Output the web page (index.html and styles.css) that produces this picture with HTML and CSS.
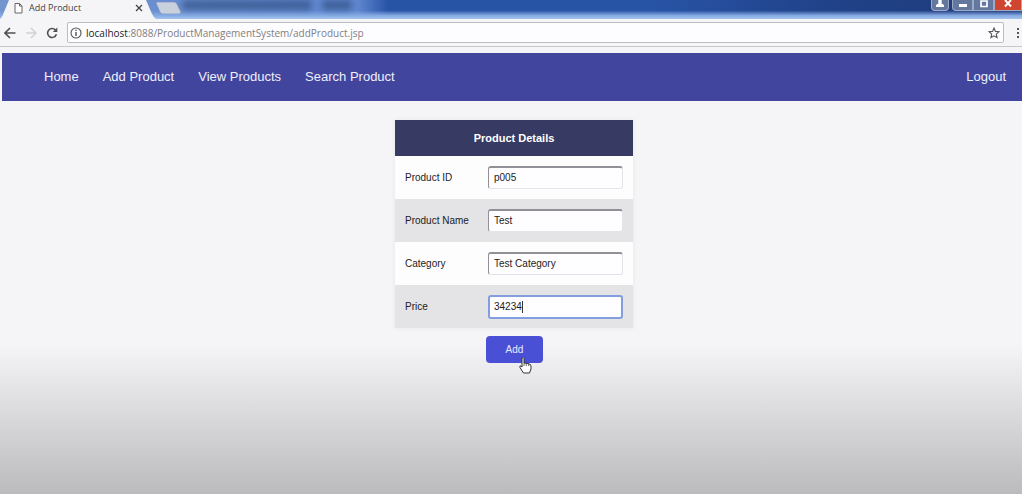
FILE: index.html
```
<!DOCTYPE html>
<html lang="en">
<head>
<meta charset="utf-8">
<title>Add Product</title>
<link rel="stylesheet" href="styles.css">
</head>
<body>
<header class="browser">
  <div class="titlebar">
    <div class="tab">
      <svg class="tab-bg" viewBox="0 0 156 19" preserveAspectRatio="none" aria-hidden="true"><path d="M0 19 Q2 18 4 12 L9 0 H146 L152 14 Q154 18 156 19Z" fill="#f5f5f7"/></svg>
      <svg class="page-icon" viewBox="0 0 9 12" aria-hidden="true"><path d="M1 1.5H5.5L8 4V11H1Z M5.5 1.5V4H8" fill="#fff" stroke="#666"/></svg>
      <span class="tab-title">Add Product</span>
      <button class="tab-close" aria-label="Close tab"><svg viewBox="0 0 8 8"><path d="M1 1L7 7M7 1L1 7" stroke="#444" stroke-width="1.3"/></svg></button>
    </div>
    <button class="new-tab" aria-label="New tab"><svg viewBox="0 0 26 12"><path d="M1 0H18Q20 0 21 2L25 10Q25 12 23 12H7Q5 12 4 10L0 1Z" fill="#c9d1df" stroke="#7e93b9" stroke-width=".7"/></svg></button>
    <div class="glass"><i class="smudge smudge-long"></i><i class="smudge smudge-short"></i></div>
    <div class="window-controls">
      <button class="control user" aria-label="Profile"><svg viewBox="0 0 10 8"><path d="M3.3 0H6.7V3H6L9 5V7H1V5L4 3H3.3Z" fill="#fff"/></svg></button>
      <button class="control minimize" aria-label="Minimize"><svg viewBox="0 0 10 8"><path d="M1 4H9V7H1Z" fill="#fff"/></svg></button>
      <button class="control restore" aria-label="Restore"><svg viewBox="0 0 10 8"><path d="M2 1H8V6.5H2Z" fill="none" stroke="#fff" stroke-width="1.7"/></svg></button>
      <button class="control close" aria-label="Close"><svg viewBox="0 0 10 8"><path d="M2 0L8 6.5M8 0L2 6.5" stroke="#fff" stroke-width="2"/></svg></button>
    </div>
  </div>
  <div class="toolbar">
    <button class="tool" aria-label="Back"><svg viewBox="0 0 12 12"><path d="M11.5 6H1.5M6 1L1 6L6 11" fill="none" stroke="#505054" stroke-width="1.6"/></svg></button>
    <button class="tool" aria-label="Forward"><svg viewBox="0 0 12 12"><path d="M1 6H10.5M6 1L11 6L6 11" fill="none" stroke="#d2d2d6" stroke-width="1.5"/></svg></button>
    <button class="tool" aria-label="Reload"><svg viewBox="0 0 12 12"><path d="M9.5 3A4.5 4.5 0 1 0 10.4 7.3" fill="none" stroke="#505054" stroke-width="1.6"/><path d="M11.3 .5V5H6.8Z" fill="#505054"/></svg></button>
    <div class="address">
      <svg class="info" viewBox="0 0 12 12" aria-hidden="true"><circle cx="6" cy="6" r="5" fill="none" stroke="#555" stroke-width="1.1"/><path d="M6 5V9M6 2.8V4.1" stroke="#555" stroke-width="1.4"/></svg>
      <span class="url"><b class="host">localhost</b>:8088/ProductManagementSystem/addProduct.jsp</span>
      <button class="star" aria-label="Bookmark"><svg viewBox="0 0 12 12"><path d="M6 1L7.4 4.4L11 4.7L8.3 7.1L9.1 10.7L6 8.8L2.9 10.7L3.7 7.1L1 4.7L4.6 4.4Z" fill="none" stroke="#555" stroke-width="1.1"/></svg></button>
    </div>
    <button class="more" aria-label="Menu"><svg viewBox="0 0 4 12"><path d="M1 1H3V3H1ZM1 5H3V7H1ZM1 9H3V11H1Z" fill="#555"/></svg></button>
  </div>
</header>
<nav class="nav">
  <a href="#home">Home</a>
  <a href="#add">Add Product</a>
  <a href="#view">View Products</a>
  <a href="#search">Search Product</a>
  <a class="logout" href="#logout">Logout</a>
</nav>
<main class="main">
  <form class="form">
    <table class="details">
      <thead><tr><th colspan="2">Product Details</th></tr></thead>
      <tbody>
        <tr><td><label for="pid">Product ID</label></td><td class="value"><input class="field" id="pid" type="text" value="p005"></td></tr>
        <tr><td><label for="pname">Product Name</label></td><td class="value"><input class="field" id="pname" type="text" value="Test"></td></tr>
        <tr><td><label for="category">Category</label></td><td class="value"><input class="field" id="category" type="text" value="Test Category"></td></tr>
        <tr><td><label for="price">Price</label></td><td class="value"><div class="active-field"><input class="field active" id="price" type="text" value="34234"><i class="caret"></i></div></td></tr>
      </tbody>
    </table>
    <div class="action">
      <button class="add" type="button">Add</button>
      <svg class="cursor" viewBox="0 0 13 17" aria-hidden="true"><path d="M3 1Q4.5 0 5 1.5V6L9 6.5Q12 7 12 9V12L10.5 16H4.5L1 10.5Q.3 8.5 2 9L3 10Z" fill="#fff" stroke="#333"/><path d="M5 6V9M7.3 6.5V9M9.6 7V9" stroke="#444" stroke-width=".8"/></svg>
    </div>
  </form>
</main>
</body>
</html>
```
FILE: styles.css
```
* { box-sizing: border-box; }
body {
  margin: 0;
  min-height: 100vh;
  display: flex;
  flex-direction: column;
  background: #f5f4f7;
  font-family: "Liberation Sans", Arial, sans-serif;
}
button { padding: 0; border: 0; background: none; font: inherit; }
svg { display: block; }
.browser { background: #f5f5f7; border-bottom: 1px solid #c8c8cc; font-family: "Open Sans", sans-serif; }
.titlebar {
  display: flex;
  height: 19px;
  overflow: hidden;
  background: linear-gradient(#24408c00 55%, #86aae3 82%, #a6c4ed), linear-gradient(90deg, #7294cf, #5f86cf 35%, #2854a6 38%, #2854a6 64%, #21438a 80%, #1e3979);
}
.tab { position: relative; display: flex; flex: 0 0 156px; height: 19px; padding: 0 12px 0 14px; align-items: flex-start; }
.tab-bg { position: absolute; inset: 0; width: 100%; height: 100%; }
.page-icon { position: relative; width: 9px; height: 12px; margin-top: 2px; }
.tab-title { position: relative; flex: 1; margin-left: 6px; font-size: 9px; line-height: 16px; color: #444; }
.tab-close { position: relative; width: 8px; height: 8px; margin: 4px 1px 0 0; }
.new-tab { width: 26px; height: 12px; margin-top: 2px; }
.glass { flex: 1; display: flex; }
.smudge { height: 10px; border-radius: 4px; background: #294777; filter: blur(3px); opacity: .6; }
.smudge-long { width: 130px; }
.smudge-short { width: 30px; margin-left: 10px; }
.window-controls { display: flex; height: 11px; }
.control { display: flex; justify-content: center; width: 21px; height: 11px; border: 1px solid #9caac6; border-top: 0; background: #63779f; }
.control svg { width: 10px; height: 8px; }
.user { width: 18px; margin-right: 3px; border-radius: 0 0 4px 4px; }
.minimize { border-radius: 0 0 0 4px; }
.close { width: 28px; background: #d0452f; }
.toolbar { display: flex; align-items: center; height: 27px; padding: 0 2px 0 4px; }
.tool { width: 12px; height: 12px; margin-right: 9px; }
.tool svg, .star svg { width: 12px; height: 12px; }
.address { display: flex; flex: 1; align-items: center; height: 21px; margin-right: 12px; padding: 0 3px 0 2px; border: 1px solid #bdbdc0; border-radius: 2px; background: #fdfcfe; }
.info { width: 12px; height: 12px; margin-right: 4px; }
.url { flex: 1; font-size: 10px; line-height: 16px; color: #808080; white-space: nowrap; }
.host { font-weight: 400; color: #222; }
.more svg { width: 4px; height: 12px; }
.nav { display: flex; gap: 24px; align-items: center; height: 48px; margin: 6px 0 0 2px; padding: 0 16px 2px 42px; background: #42459d; font-size: 13px; }
.nav a { color: #eeeffc; text-decoration: none; }
.nav .logout { margin-left: auto; }
.main { flex: 1; padding: 19px 0 20px 6px; background: linear-gradient(#f5f4f7 62%, #bbbabc); }
.form { width: 238px; margin: 0 auto; }
.details { width: 100%; border-collapse: collapse; font-size: 10px; color: #222; box-shadow: 0 0 5px #00000010; }
.details th { height: 36px; padding: 0; background: #373b63; color: #fff; font-size: 11px; }
.details td { height: 43px; padding: 0 0 0 10px; }
.details .value { width: 145px; padding: 0 10px 0 0; }
.details tbody tr { background: #fefdfe; }
.details tbody tr:nth-child(even) { background: #e4e3e6; }
.field { display: block; width: 100%; height: 23px; padding: 0 5px 2px; border: 1px solid #e4e3e7; border-top: 2px solid #929096; border-left: 1px solid #929096; border-radius: 3px; outline: 0; background: #fefdff; font: 10px "Liberation Sans", Arial, sans-serif; color: #222; }
.active-field { position: relative; }
.active { height: 24px; padding: 0 4px; border: 2px solid #839ee0; }
.caret { position: absolute; top: 6px; left: 34px; width: 1px; height: 12px; background: #333; }
.action { position: relative; width: 57px; margin: 8px 0 0 91px; }
.add { display: block; width: 100%; height: 27px; border-radius: 4px; background: #4a50d6; color: #e9edff; font-size: 10px; }
.cursor { position: absolute; top: 21px; left: 33px; width: 13px; height: 17px; }
```
